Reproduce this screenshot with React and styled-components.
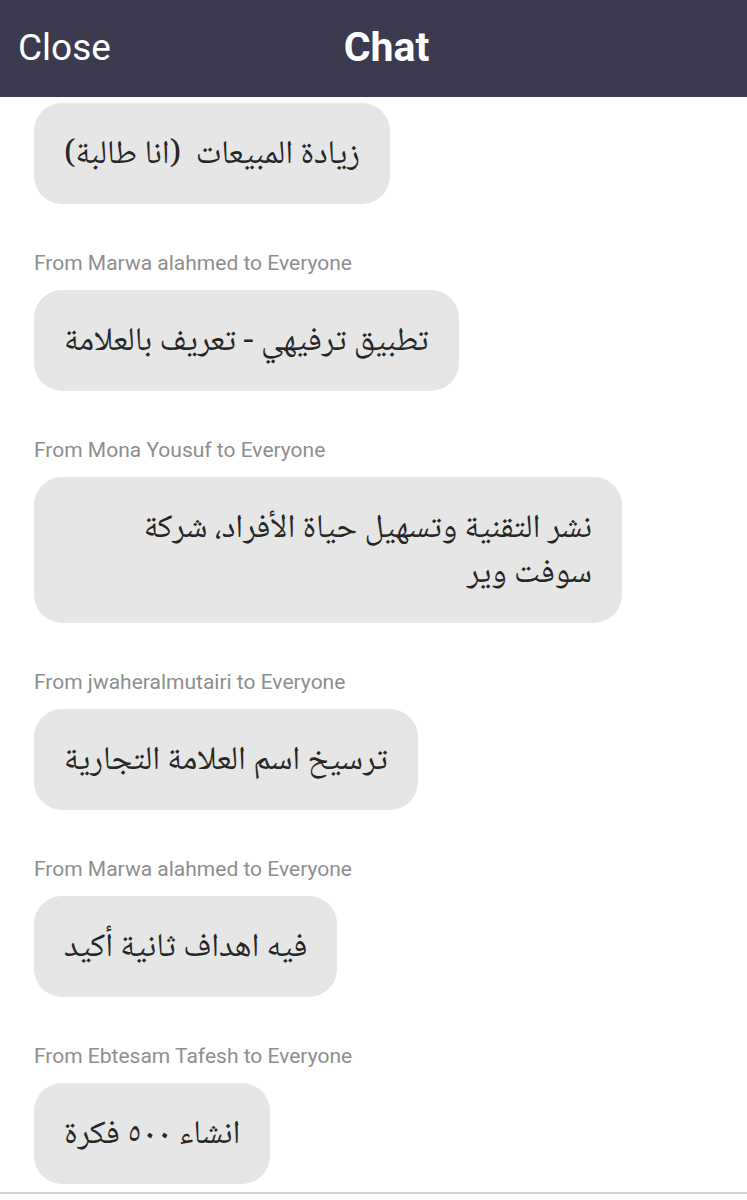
import React from "react";
import styled, { createGlobalStyle } from "styled-components";

const GlobalStyle = createGlobalStyle`
  html, body {
    margin: 0;
    padding: 0;
    background: #ffffff;
  }
  body {
    font-family: Roboto, "Noto Sans", sans-serif;
  }
`;

const Screen = styled.div`
  width: 747px;
  height: 1200px;
  display: flex;
  flex-direction: column;
  overflow: hidden;
  background: #ffffff;
`;

const Header = styled.header`
  height: 97px;
  flex: none;
  background: #3b3a4f;
  display: grid;
  grid-template-columns: 1fr auto 1fr;
  align-items: center;
  padding: 0 18px;
  box-sizing: border-box;
  color: #ffffff;
`;

const CloseButton = styled.button`
  justify-self: start;
  background: none;
  border: none;
  padding: 0;
  color: #ffffff;
  font-family: Roboto, sans-serif;
  font-size: 37px;
  font-weight: 400;
  margin-top: -3px;
`;

const Title = styled.h1`
  margin: -3px 0 0 26px;
  font-family: Roboto, sans-serif;
  font-size: 41px;
  font-weight: 700;
`;

const List = styled.div`
  flex: none;
  height: 1097px;
  box-sizing: border-box;
  display: flex;
  flex-direction: column;
  align-items: flex-start;
  padding: 6px 34px 0;
  border-bottom: 2px solid #cfcfcf;
  overflow: hidden;
`;

const Message = styled.div`
  display: flex;
  flex-direction: column;
  align-items: flex-start;
  margin-top: ${(p) => (p.$first ? "0" : "47px")};
`;

const Sender = styled.div`
  font-family: Roboto, sans-serif;
  font-size: 21px;
  line-height: 24px;
  color: #8e8e8e;
  margin-bottom: 15px;
`;

const Bubble = styled.div`
  direction: rtl;
  text-align: right;
  background: #e6e6e6;
  border-radius: 28px;
  padding: 31px 30px 25px;
  max-width: 588px;
  box-sizing: border-box;
  font-family: "Noto Naskh Arabic", "Noto Sans Arabic", "DejaVu Sans", sans-serif;
  font-size: 33px;
  line-height: 45px;
  color: #262626;
`;

const messages = [
  { from: null, text: "زيادة المبيعات\u00a0 (انا طالبة)" },
  { from: "Marwa alahmed", text: "تطبيق ترفيهي - تعريف بالعلامة" },
  { from: "Mona Yousuf", text: "نشر التقنية وتسهيل حياة الأفراد، شركة سوفت وير" },
  { from: "jwaheralmutairi", text: "ترسيخ اسم العلامة التجارية" },
  { from: "Marwa alahmed", text: "فيه اهداف ثانية أكيد" },
  { from: "Ebtesam Tafesh", text: "انشاء ٥٠٠ فكرة" },
];

export default function App() {
  return (
    <>
      <GlobalStyle />
      <Screen>
        <Header>
          <CloseButton>Close</CloseButton>
          <Title>Chat</Title>
        </Header>
        <List>
          {messages.map((m, i) => (
            <Message key={i} $first={!m.from}>
              {m.from && <Sender>From {m.from} to Everyone</Sender>}
              <Bubble>{m.text}</Bubble>
            </Message>
          ))}
        </List>
      </Screen>
    </>
  );
}
